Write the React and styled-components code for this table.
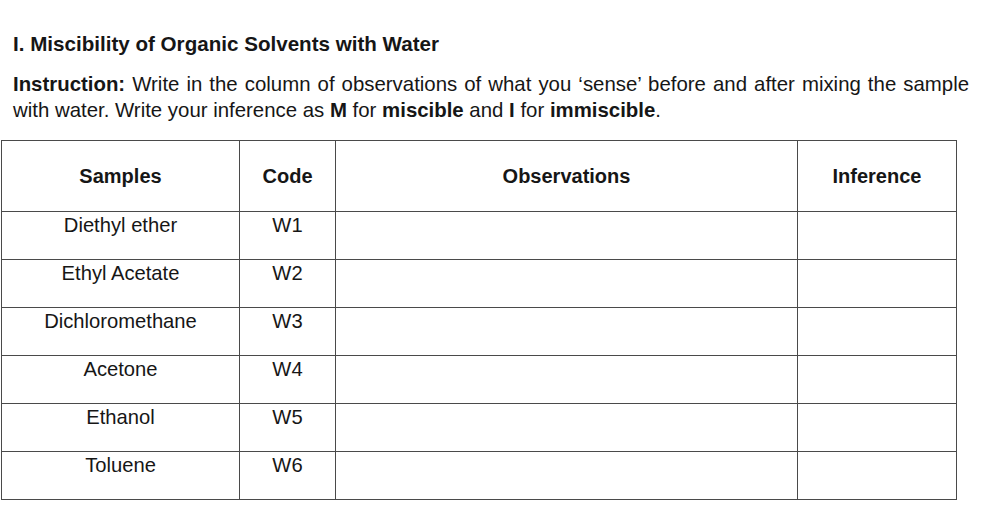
import styled, { createGlobalStyle } from "styled-components";

const GlobalStyle = createGlobalStyle`
  body {
    margin: 0;
    background: #ffffff;
    font-family: "Liberation Sans", Arial, sans-serif;
    color: #161616;
  }
`;

const samples = [
  { name: "Diethyl ether", code: "W1" },
  { name: "Ethyl Acetate", code: "W2" },
  { name: "Dichloromethane", code: "W3" },
  { name: "Acetone", code: "W4" },
  { name: "Ethanol", code: "W5" },
  { name: "Toluene", code: "W6" },
];

const App = () => {
  return (
    <>
      <GlobalStyle />
      <Page>
        <Title>I. Miscibility of Organic Solvents with Water</Title>
        <Instruction>
          <b>Instruction:</b> Write in the column of observations of what you ‘sense’ before and after mixing the sample
          with water. Write your inference as <b>M</b> for <b>miscible</b> and <b>I</b> for <b>immiscible</b>.
        </Instruction>
        <Table>
          <colgroup>
            <col style={{ width: 238 }} />
            <col style={{ width: 96 }} />
            <col style={{ width: 462 }} />
            <col style={{ width: 159 }} />
          </colgroup>
          <thead>
            <tr>
              <HeadCell>Samples</HeadCell>
              <HeadCell>Code</HeadCell>
              <HeadCell>Observations</HeadCell>
              <HeadCell>Inference</HeadCell>
            </tr>
          </thead>
          <tbody>
            {samples.map((s) => (
              <tr key={s.code}>
                <Cell>{s.name}</Cell>
                <Cell>{s.code}</Cell>
                <Cell></Cell>
                <Cell></Cell>
              </tr>
            ))}
          </tbody>
        </Table>
      </Page>
    </>
  );
};

export default App;

const Page = styled.div`
  padding: 33px 0 0 1px;
`;

const Title = styled.h1`
  margin: 0 0 0 12px;
  font-size: 20.6px;
  font-weight: bold;
  line-height: 22px;
`;

const Instruction = styled.p`
  width: 956px;
  margin: 16px 0 0 12px;
  font-size: 20.4px;
  line-height: 26px;
  text-align: justify;
  text-align-last: left;
`;

const Table = styled.table`
  margin-top: 17px;
  border-collapse: collapse;
  table-layout: fixed;
  width: 956px;
`;

const HeadCell = styled.th`
  height: 70px;
  border: 1px solid #4a4a4a;
  font-size: 20px;
  font-weight: bold;
  text-align: center;
  vertical-align: middle;
  padding: 0;
`;

const Cell = styled.td`
  height: 45px;
  border: 1px solid #4a4a4a;
  font-size: 20.2px;
  text-align: center;
  vertical-align: top;
  padding: 2px 0 0;
  line-height: 22px;
`;
